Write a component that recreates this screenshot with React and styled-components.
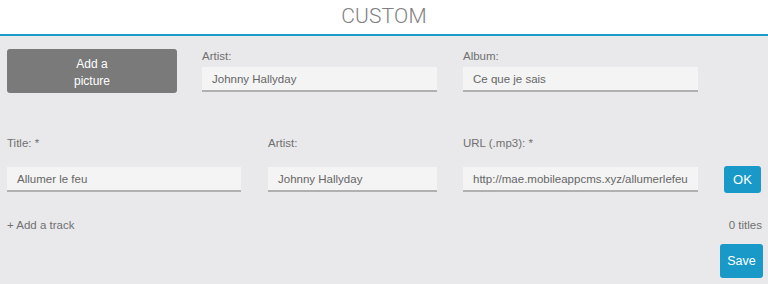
import styled, { createGlobalStyle } from "styled-components";

const GlobalStyle = createGlobalStyle`
  html, body {
    margin: 0;
    padding: 0;
    background: #e9e9eb;
  }
  body {
    font-family: "Liberation Sans", Arial, sans-serif;
    color: #666;
  }
  * {
    box-sizing: border-box;
  }
`;

const Page = styled.div`
  width: 768px;
  height: 284px;
  display: flex;
  flex-direction: column;
  background: #e9e9eb;
  overflow: hidden;
`;

const Header = styled.header`
  height: 36px;
  background: #fff;
  border-bottom: 2px solid #1b9bc8;
  display: flex;
  align-items: center;
  justify-content: center;
  padding-bottom: 3px;
`;

const Title = styled.h1`
  margin: 0;
  font-family: Roboto, "Liberation Sans", sans-serif;
  font-weight: 300;
  font-size: 21px;
  color: #808080;
  letter-spacing: 0.2px;
`;

const Body = styled.div`
  flex: 1;
  padding: 13px 5px 5px 7px;
  display: flex;
  flex-direction: column;
`;

const AlbumRow = styled.div`
  display: flex;
  align-items: flex-start;
`;

const PictureButton = styled.button`
  width: 170px;
  height: 44px;
  border: none;
  border-radius: 3px;
  background: #7a7a7a;
  color: #fff;
  font-family: "Liberation Sans", Arial, sans-serif;
  font-size: 12px;
  line-height: 17px;
  padding: 4px 0 0;
  margin-right: 25px;
  text-align: center;
  cursor: pointer;
`;

const Field = styled.div`
  width: ${(p) => p.$w}px;
  margin-right: ${(p) => p.$mr || 0}px;
  display: flex;
  flex-direction: column;
  gap: ${(p) => p.$gap}px;
`;

const Label = styled.label`
  font-size: 11.5px;
  line-height: 14px;
  color: #707070;
`;

const Input = styled.div`
  height: 25px;
  background: #f4f4f4;
  border-bottom: 2px solid #b0b0b0;
  padding: 0 10px;
  display: flex;
  align-items: center;
  font-size: 11.5px;
  color: #666;
  white-space: nowrap;
  overflow: hidden;
`;

const TrackRow = styled.div`
  display: flex;
  align-items: flex-end;
  margin-top: 43px;
`;

const OkButton = styled.button`
  width: 37px;
  height: 27px;
  margin-left: 26px;
  margin-bottom: -1px;
  border: none;
  border-radius: 3px;
  background: #1899c8;
  color: #fff;
  font-family: "Liberation Sans", Arial, sans-serif;
  font-size: 13px;
  padding: 0;
`;

const Footer = styled.div`
  display: flex;
  justify-content: space-between;
  align-items: center;
  margin-top: 26px;
  font-size: 11.5px;
  line-height: 14px;
  color: #707070;
`;

const AddTrack = styled.span`
  cursor: pointer;
`;

const Count = styled.span`
  margin-right: 1px;
`;

const SaveRow = styled.div`
  display: flex;
  justify-content: flex-end;
  margin-top: 12px;
`;

const SaveButton = styled.button`
  width: 43px;
  height: 34px;
  border: none;
  border-radius: 3px;
  background: #1899c8;
  color: #fff;
  font-family: "Liberation Sans", Arial, sans-serif;
  font-size: 12.5px;
  padding: 0;
`;

export default function App() {
  return (
    <Page>
      <GlobalStyle />
      <Header>
        <Title>CUSTOM</Title>
      </Header>
      <Body>
        <AlbumRow>
          <PictureButton>
            Add a
            <br />
            picture
          </PictureButton>
          <Field $w={235} $mr={26} $gap={4}>
            <Label>Artist:</Label>
            <Input>Johnny Hallyday</Input>
          </Field>
          <Field $w={235} $gap={4}>
            <Label>Album:</Label>
            <Input>Ce que je sais</Input>
          </Field>
        </AlbumRow>
        <TrackRow>
          <Field $w={234} $mr={27} $gap={17}>
            <Label>Title: *</Label>
            <Input>Allumer le feu</Input>
          </Field>
          <Field $w={169} $mr={26} $gap={17}>
            <Label>Artist:</Label>
            <Input>Johnny Hallyday</Input>
          </Field>
          <Field $w={235} $gap={17}>
            <Label>URL (.mp3): *</Label>
            <Input>http://mae.mobileappcms.xyz/allumerlefeu</Input>
          </Field>
          <OkButton>OK</OkButton>
        </TrackRow>
        <Footer>
          <AddTrack>+ Add a track</AddTrack>
          <Count>0 titles</Count>
        </Footer>
        <SaveRow>
          <SaveButton>Save</SaveButton>
        </SaveRow>
      </Body>
    </Page>
  );
}
